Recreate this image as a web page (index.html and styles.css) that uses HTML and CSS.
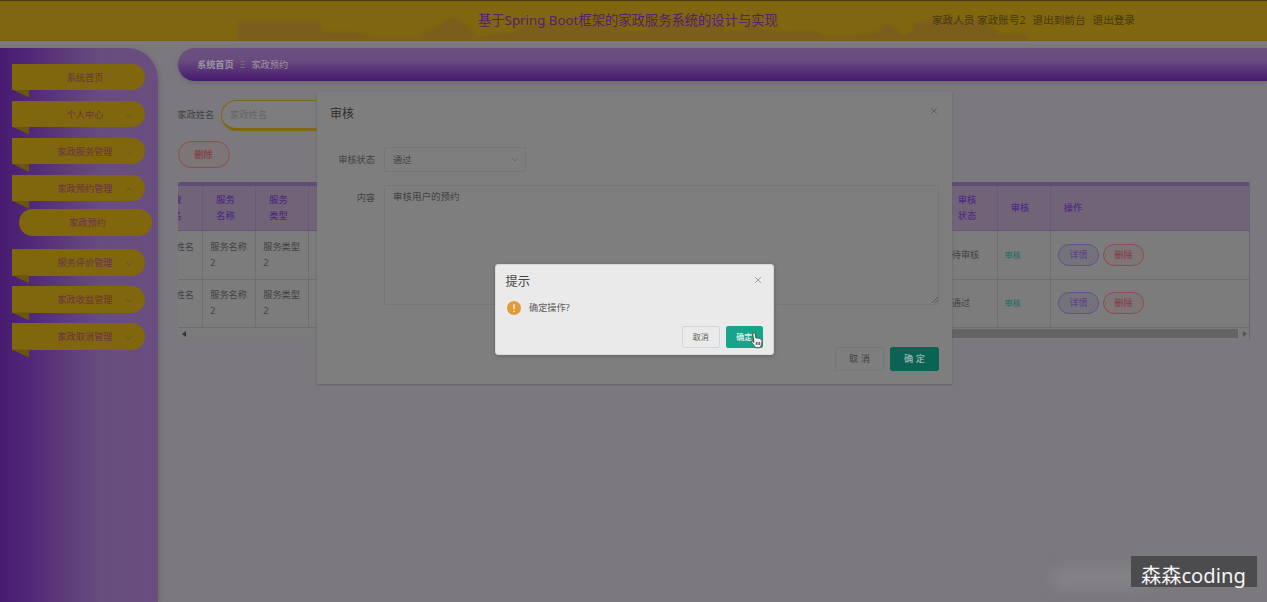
FILE: index.html
```html
<!DOCTYPE html>
<html lang="zh-CN">
<head>
<meta charset="utf-8">
<title>基于Spring Boot框架的家政服务系统的设计与实现</title>
<link rel="stylesheet" href="styles.css">
</head>
<body>
<header class="topbar">
  <svg class="skyline" viewBox="0 0 800 26" preserveAspectRatio="none"><path d="M1 26V16L3 5H84L86 17L120 18L140 23H186L190 14L202 13L212 3H222L234 13L242 23L278 18L292 10L310 7L340 11L360 7L382 12L390 17H410L424 8L452 0L478 5L490 16H510L518 7L525 14L556 17L580 16L590 21H626L646 16L652 9L664 14L668 22L680 16V8L714 1L725 5H745L758 10L764 20H795V26Z"/></svg>
  <h1 class="title">基于Spring Boot框架的家政服务系统的设计与实现</h1>
  <nav class="account"><span>家政人员 家政账号2</span><span>退出到前台</span><span>退出登录</span></nav>
</header>
<div class="layout">
  <aside class="sidebar">
    <div class="item"><span>系统首页</span></div>
    <div class="item"><span>个人中心</span><svg class="chev" viewBox="0 0 8 5"><path d="M1 1L4 4L7 1"/></svg></div>
    <div class="item"><span>家政服务管理</span><svg class="chev" viewBox="0 0 8 5"><path d="M1 1L4 4L7 1"/></svg></div>
    <div class="item open"><span>家政预约管理</span><svg class="chev" viewBox="0 0 8 5"><path d="M1 4L4 1L7 4"/></svg></div>
    <div class="subitem"><span>家政预约</span></div>
    <div class="item"><span>服务评价管理</span><svg class="chev" viewBox="0 0 8 5"><path d="M1 1L4 4L7 1"/></svg></div>
    <div class="item"><span>家政收益管理</span><svg class="chev" viewBox="0 0 8 5"><path d="M1 1L4 4L7 1"/></svg></div>
    <div class="item"><span>家政取消管理</span><svg class="chev" viewBox="0 0 8 5"><path d="M1 1L4 4L7 1"/></svg></div>
  </aside>
  <main class="main">
    <div class="crumbs"><b>系统首页</b><i>Ξ</i><span>家政预约</span></div>
    <div class="filter"><span>家政姓名</span><div class="search">家政姓名</div></div>
    <div class="pill danger bulk">删除</div>
    <section class="table">
      <div class="row head">
        <div>家政<br>姓名</div><div>服务<br>名称</div><div>服务<br>类型</div><div></div><div>审核<br>状态</div><div>审核</div><div>操作</div>
      </div>
      <div class="row">
        <div>家政姓名<br>&nbsp;</div><div>服务名称<br>2</div><div>服务类型<br>2</div><div></div><div>待审核</div><div><span class="link">审核</span></div><div><span class="pill detail">详情</span><span class="pill danger">删除</span></div>
      </div>
      <div class="row">
        <div>家政姓名<br>&nbsp;</div><div>服务名称<br>2</div><div>服务类型<br>2</div><div></div><div>通过</div><div><span class="link">审核</span></div><div><span class="pill detail">详情</span><span class="pill danger">删除</span></div>
      </div>
      <div class="scroll">
        <svg viewBox="0 0 4 6"><path d="M4 0V6L0 3Z"/></svg><div class="thumb"></div><svg class="end" viewBox="0 0 4 6"><path d="M0 0V6L4 3Z"/></svg>
      </div>
    </section>
  </main>
</div>
<section class="dialog">
  <div class="dialog-head"><h2>审核</h2><svg class="close" viewBox="0 0 8 8"><path d="M1 1L7 7M7 1L1 7"/></svg></div>
  <div class="field"><label>审核状态</label><div class="select">通过<svg class="chev" viewBox="0 0 8 5"><path d="M1 1L4 4L7 1"/></svg></div></div>
  <div class="field"><label>内容</label><div class="textarea">审核用户的预约<svg class="grip" viewBox="0 0 6 6"><path d="M0 6L6 0M3 6L6 3"/></svg></div></div>
  <div class="actions"><div class="btn">取 消</div><div class="btn primary">确 定</div></div>
</section>
<section class="confirm">
  <div class="confirm-head"><h3>提示</h3><svg class="close" viewBox="0 0 8 8"><path d="M1 1L7 7M7 1L1 7"/></svg></div>
  <div class="message"><svg class="warn" viewBox="0 0 14 14"><circle cx="7" cy="7" r="7"/><path d="M7 3.2V8"/><path d="M7 9.7V11"/></svg><span>确定操作?</span></div>
  <div class="confirm-actions"><div class="btn small">取消</div><div class="btn small primary">确定</div></div>
</section>
<svg class="cursor" viewBox="0 0 13 17"><path d="M3.5 1Q5.2 .5 5.4 2L5.8 6L7 5.6L8 6.3L9.2 6L10 6.8Q12.3 6.5 12.2 9Q12.2 13 10 15.7H5.5Q4 13 1.2 10.3Q.8 8.8 2.2 9L3.9 10.4L2.7 2Q2.8 1.2 3.5 1Z"/><path d="M6.3 10V13M8 10V13M9.7 10V13"/></svg>
<div class="haze"></div>
<div class="watermark">森森coding</div>
</body>
</html>
```
FILE: styles.css
```css
* { box-sizing: border-box; }
body { margin: 0; width: 1267px; height: 602px; overflow: hidden; position: relative; background: #7b797e; font: 9.2px/16px "Noto Sans", "Noto Sans CJK SC", sans-serif; color: #424245; }
h1, h2, h3 { margin: 0; font-weight: 400; }
svg { display: block; flex: none; }

.topbar { position: relative; height: 41px; background: #80660f; border-top: 1px solid #473a15; border-bottom: 1px solid #7c5f1b; }
.skyline { position: absolute; left: 236px; bottom: 0; width: 797px; height: 24px; fill: #7b5e1b; filter: blur(.8px); }
.title { position: absolute; left: 478px; top: 10px; width: 305px; font-size: 13.3px; line-height: 18px; color: #54216d; white-space: nowrap; }
.account { position: absolute; left: 932px; top: 10px; display: flex; gap: 7px; font-size: 10.6px; line-height: 18px; color: #47380f; white-space: nowrap; }

.layout { display: flex; height: 561px; padding-top: 7px; }
.sidebar { width: 158px; flex: none; padding: 15.5px 0 0 12px; border-radius: 0 31px 0 0; background: linear-gradient(90deg, #491b70 0, #4c2175 15px, #52297a 32px, #5d3b79 64px, #674c7e 100px, #6a4e80 158px); box-shadow: 2px 1px 5px #6c6b6d; }
.item { position: relative; width: 133px; height: 26.5px; margin-bottom: 10.6px; border-radius: 0 14px 14px 0; background: #80660d; color: #6a3442; text-align: center; line-height: 27px; padding-left: 13px; }
.item::after { content: ""; position: absolute; left: 0; top: 26px; width: 17px; height: 8px; background: #6a560c; clip-path: polygon(0 0, 100% 0, 100% 100%); }
.item span { display: inline-block; }
.item .chev { position: absolute; right: 12px; top: 12px; }
.open { margin-bottom: 8px; }
.subitem { width: 133px; height: 26.5px; margin: 0 0 13.5px 6.5px; border-radius: 14px; background: #80660d; color: #6a3442; text-align: center; line-height: 27px; padding-left: 5px; }
.chev { width: 8px; height: 5px; fill: none; stroke: #6b512a; stroke-width: .8; }

.main { width: 1109px; padding-left: 19.5px; }
.crumbs { display: flex; align-items: center; gap: 6px; height: 33px; padding-left: 19.5px; border-radius: 17px 0 0 17px; background: linear-gradient(#6b4f80 0, #6a4c7f 35%, #593577 65%, #47196d 100%); color: #9b94a0; box-shadow: 0 2px 5px #69686c; }
.crumbs i { font-style: normal; color: #807388; font-size: 9px; }
.filter { display: flex; align-items: center; height: 31px; margin-top: 19px; gap: 7px; }
.filter > span { margin-top: -1px; }
.search { width: 150px; height: 31px; padding: 5px 8px; border: 1.5px solid #80680f; border-bottom-width: 3.5px; border-radius: 16px; background: #7d7c7e; color: #656468; line-height: 17px; }
.pill { display: inline-flex; align-items: center; justify-content: center; width: 41.5px; height: 22px; border-radius: 12px; border: 1px solid; }
.danger { color: #863a40; border-color: #8c4c50; background: #7d7576; }
.detail { color: #5b3f8b; border-color: #63508b; background: #76727c; margin-right: 3.5px; }
.bulk { display: flex; width: 52px; height: 27px; margin-top: 10px; border-radius: 14px; font-weight: 500; }

.table { width: 1072.5px; height: 157px; margin-top: 13.5px; overflow: hidden; border-top: 4px solid #614c75; border-right: 1px solid #6b6279; border-radius: 2px 2px 0 0; background: #7c7c7d; }
.row { display: grid; grid-template-columns: 53px 53px 53px 635.5px 53px 53px 200px; width: 1100.5px; height: 48.5px; margin-left: -27.3px; border-bottom: 1px solid #6e6b73; color: #424244; }
.row > div { display: flex; align-items: center; padding: 0 7px; border-right: 1px solid #706d74; white-space: nowrap; }
.head { height: 45.5px; background: #716479; color: #4f2b82; font-weight: 500; border-color: #66567a; }
.head > div { padding-left: 13px; border-color: #69597a; }
.link { color: #166c5b; font-size: 8px; }
.scroll { display: flex; align-items: center; height: 11px; padding: 0 2px 0 4px; background: #7b7a7d; }
.scroll svg { width: 4px; height: 6px; fill: #333; }
.scroll .end { fill: #555; }
.thumb { flex: 1; height: 9px; margin: 0 5px 0 180px; background: #646466; }

.dialog { position: absolute; left: 317px; top: 92px; width: 635px; height: 292px; padding: 12px 13px; background: #7e7e7e; box-shadow: 0 1px 2px #626264; }
.dialog-head { display: flex; justify-content: space-between; }
.dialog-head h2 { font-size: 12px; line-height: 20px; color: #2e2e30; }
.close { width: 8px; height: 8px; margin: 3px 1px; fill: none; stroke: #58585a; stroke-width: .8; }
.field { display: flex; align-items: flex-start; }
.field label { width: 45px; margin-right: 9px; text-align: right; line-height: 26px; }
.field + .field { margin-top: 12px; }
.dialog-head + .field { margin-top: 23px; }
.select { display: flex; align-items: center; justify-content: space-between; width: 142px; height: 25px; padding: 0 6px 0 8px; border: 1px solid #777778; border-radius: 2px; }
.select .chev { stroke: #626264; }
.textarea { position: relative; width: 555px; height: 120px; padding: 3px 8px; border: 1px solid #767677; border-radius: 2px; font-size: 9.5px; }
.grip { position: absolute; right: 0; bottom: 1px; width: 6px; height: 6px; stroke: #4d4d4f; stroke-width: .8; }
.actions { display: flex; justify-content: flex-end; gap: 6px; margin-top: 42px; }
.btn { display: flex; align-items: center; justify-content: center; width: 49px; height: 24px; border: 1px solid #777778; border-radius: 2px; }
.btn.primary { background: #0b6453; border-color: #0b6453; color: #9bb4af; font-weight: 500; }

.confirm { position: absolute; left: 495px; top: 264px; width: 278.5px; height: 90.5px; padding: 8px 9.5px; background: #eaeaea; border: 1px solid #d8d8d8; border-radius: 3px; box-shadow: 0 1px 4px #626262; color: #5a5a5a; }
.confirm-head { display: flex; justify-content: space-between; }
.confirm h3 { font-size: 12.2px; line-height: 18px; color: #444; }
.confirm .close { stroke: #888; }
.message { display: flex; align-items: center; gap: 8px; margin: 9px 0 0 1.5px; }
.warn { width: 14px; height: 14px; fill: #e09c39; stroke: none; }
.warn path { stroke: #f7eddc; stroke-width: 1.5; }
.confirm-actions { display: flex; justify-content: flex-end; gap: 6px; margin-top: 10px; }
.btn.small { width: 37.5px; height: 21.5px; font-size: 8px; border-color: #d5d5d5; }
.btn.small.primary { background: #16a58a; border-color: #16a58a; color: #e4f4f0; }
.cursor { position: absolute; left: 750px; top: 332px; width: 13px; height: 17px; fill: #eee; stroke: #444; stroke-width: .9; }
.haze { position: absolute; left: 1052px; top: 568px; width: 100px; height: 20px; border-radius: 10px; background: #858388; filter: blur(7px); }
.watermark { position: absolute; left: 1131px; top: 556px; width: 126px; height: 31px; padding-left: 10px; background: #4c4b4e; color: #f4f4f4; font-size: 20.2px; line-height: 39px; white-space: nowrap; }
```
